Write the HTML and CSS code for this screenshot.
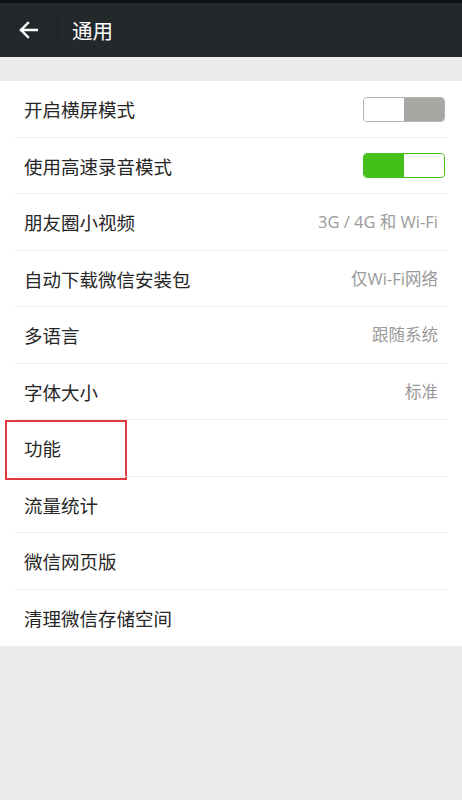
FILE: index.html
```html
<!DOCTYPE html>
<html lang="zh">
<head>
<meta charset="utf-8">
<link rel="stylesheet" href="styles.css">
</head>
<body>
<div class="app">
  <header class="topbar">
    <div class="back">
      <svg width="20" height="18" viewBox="0 0 20 18"><path d="M19 9H3M10 2L3 9l7 7" fill="none" stroke="#fff" stroke-width="2.4" stroke-linecap="square"/></svg>
    </div>
    <div class="sep"></div>
    <div class="title">通用</div>
  </header>
  <div class="gap"></div>
  <ul class="list">
    <li class="row"><span class="label">开启横屏模式</span><span class="toggle off"><i></i><i></i></span></li>
    <li class="row"><span class="label">使用高速录音模式</span><span class="toggle on"><i></i><i></i></span></li>
    <li class="row"><span class="label">朋友圈小视频</span><span class="value">3G / 4G 和 Wi-Fi</span></li>
    <li class="row"><span class="label">自动下载微信安装包</span><span class="value">仅Wi-Fi网络</span></li>
    <li class="row"><span class="label">多语言</span><span class="value">跟随系统</span></li>
    <li class="row"><span class="label">字体大小</span><span class="value">标准</span></li>
    <li class="row highlight"><span class="label">功能</span><span class="mark"></span></li>
    <li class="row"><span class="label">流量统计</span></li>
    <li class="row"><span class="label">微信网页版</span></li>
    <li class="row last"><span class="label">清理微信存储空间</span></li>
  </ul>
</div>
</body>
</html>
```

FILE: styles.css
```css
* { box-sizing: border-box; }
html, body { margin: 0; padding: 0; }
body {
  background: #ebebeb;
  font-family: "Noto Sans CJK SC", "Noto Sans", sans-serif;
  width: 462px;
  height: 800px;
  overflow: hidden;
}
.topbar {
  height: 57px;
  background: #23282b;
  border-top: 3px solid #0d0f10;
  display: flex;
  align-items: center;
}
.back {
  width: 57px;
  display: flex;
  justify-content: center;
  padding-right: 2px;
}
.back svg { display: block; }
.sep {
  width: 1px;
  height: 28px;
  background: #1b1f21;
}
.title {
  color: #fff;
  font-size: 20.5px;
  margin-left: 14px;
  line-height: 1;
}
.gap { height: 24px; }
.list {
  list-style: none;
  margin: 0;
  padding: 0;
  background: #fff;
}
.row {
  height: 56.5px;
  display: flex;
  align-items: center;
  justify-content: space-between;
  padding: 0 17px 0 24px;
  position: relative;
}
.row::after {
  content: "";
  position: absolute;
  left: 15px;
  right: 15px;
  bottom: 0;
  height: 1px;
  background: #ededed;
}
.row.last::after { display: none; }
.label {
  font-size: 18.5px;
  color: #262626;
  line-height: 1;
}
.value {
  font-family: "Open Sans", "Noto Sans CJK SC", sans-serif;
  font-size: 16.5px;
  color: #9a9a9a;
  margin-right: 7px;
  line-height: 1;
}
.toggle {
  width: 82px;
  height: 25px;
  border-radius: 4px;
  display: flex;
  overflow: hidden;
}
.toggle i { flex: 1; display: block; }
.toggle.off { border: 1.5px solid #b3b4b2; }
.toggle.off i:first-child { background: #fff; border-radius: 3px; }
.toggle.off i:last-child { background: #a6a8a4; }
.toggle.on { border: 1.5px solid #44c01a; }
.toggle.on i:first-child { background: #44c01a; }
.toggle.on i:last-child { background: #fff; border-radius: 3px; }
.mark {
  position: absolute;
  left: 5px;
  top: 0;
  width: 122px;
  height: 60px;
  border: 2px solid #e0383c;
}
```
